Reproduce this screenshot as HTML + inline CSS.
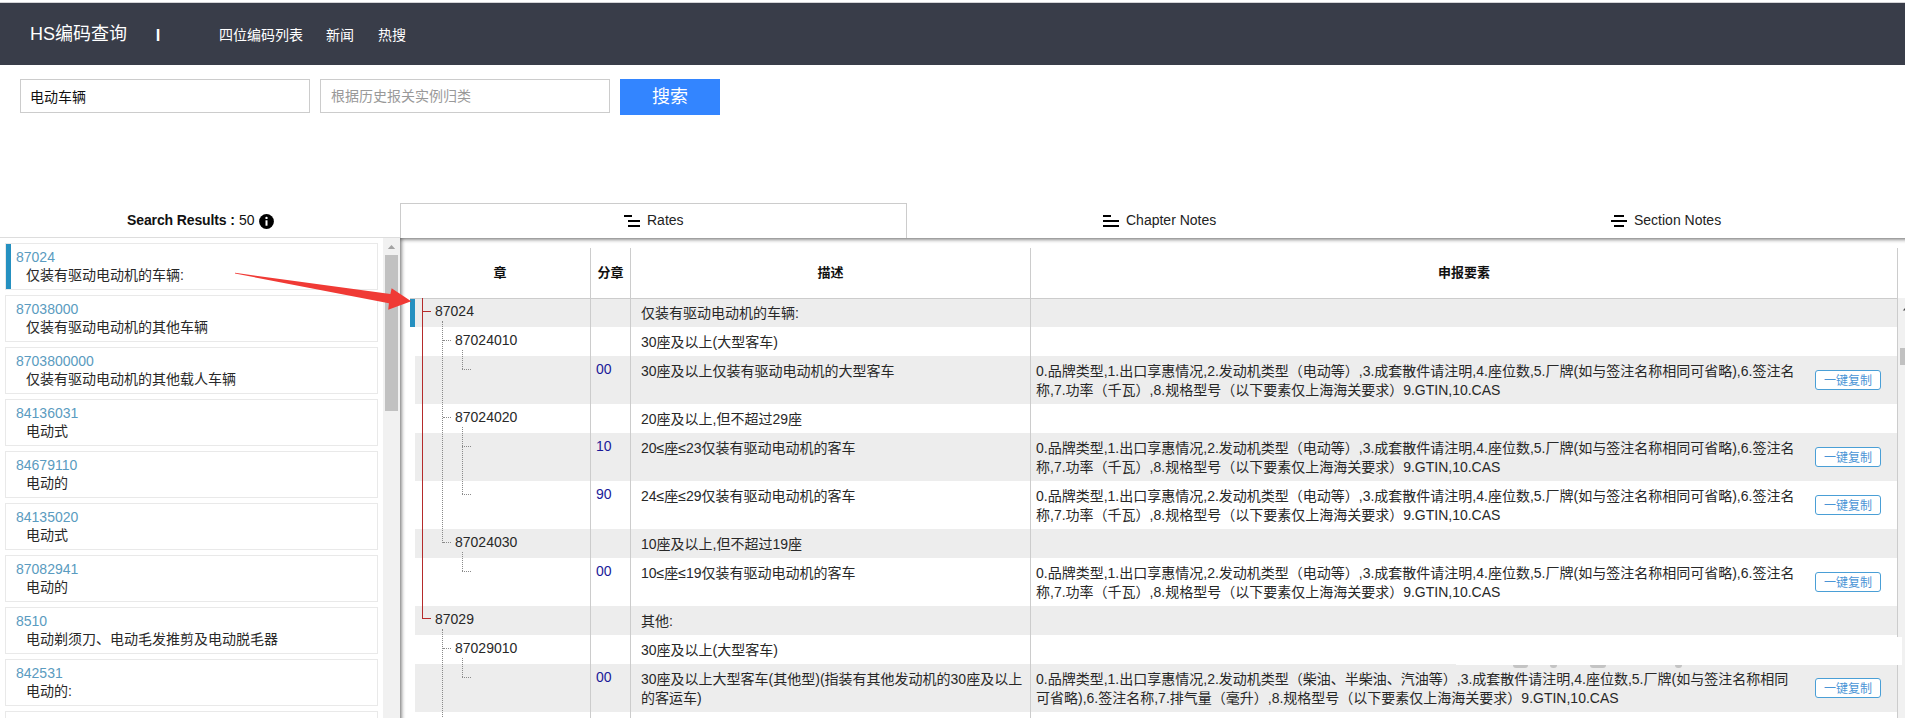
<!DOCTYPE html>
<html lang="zh-CN">
<head>
<meta charset="utf-8">
<title>HS编码查询</title>
<style>
*{box-sizing:border-box;margin:0;padding:0}
html,body{width:1905px;height:718px;overflow:hidden;background:#fff}
body{position:relative;font-family:"Liberation Sans","Noto Sans CJK SC",sans-serif;font-size:14px;color:#222}
.abs{position:absolute}
/* header */
#hdr{left:0;top:3px;width:1905px;height:62px;background:#393d49;box-shadow:0 -1px 0 0 #d4d4d7}
#hdr span{position:absolute;color:#fff;white-space:nowrap}
#logo{left:30px;top:19px;font-size:18px;line-height:24px}
#sep{left:154px;top:21px;width:8px;text-align:center;font-size:12px;line-height:20px;font-weight:bold;transform:scaleX(1.5)}
.nav{top:22px;font-size:14px;line-height:20px}
/* search */
.inp{top:79px;height:34px;width:290px;border:1px solid #ccc;background:#fff;font-size:14px;line-height:32px;padding-left:10px;white-space:nowrap}
#btn{left:620px;top:79px;width:100px;height:36px;background:#3385ff;color:#fff;font-size:18px;line-height:37px;text-align:center}
/* left */
#srh{left:0;top:209px;width:400px;height:22px;line-height:22px;font-size:14px;color:#111;white-space:nowrap}
#srh b{position:absolute;left:127px;top:0;letter-spacing:-.12px}
#srh i{position:absolute;left:239px;top:0;font-style:normal}
#hline{left:0;top:237px;width:400px;height:1px;background:#ddd}
.it{left:5px;width:373px;height:47px;border:1px solid #e9e9e9;background:#fff}
.it.sel{box-shadow:inset 5px 0 0 0 #2590c0}
.it .c{position:absolute;left:10px;top:4px;font-size:14px;line-height:18px;color:#5a9bc0;white-space:nowrap}
.it .d{position:absolute;left:20px;top:22px;font-size:14px;line-height:19px;color:#282828;white-space:nowrap}
/* scrollbar */
#sbt{left:383px;top:238px;width:17px;height:480px;background:#f1f1f1}
#sbh{left:385px;top:255px;width:13px;height:156px;background:#c1c1c1}
/* tabs */
#tab1{left:400px;top:203px;width:507px;height:36px;border:1px solid #ccc;border-bottom:none;background:#fff}
.tl{top:211px;font-size:14px;line-height:18px;color:#222;white-space:nowrap}
.bar{height:2px;background:#000}
/* panel */
#panel{left:400px;top:238px;width:1530px;height:500px;background:#fff;box-shadow:inset 1px 1px 4px 0 rgba(0,0,0,.65)}
.row{left:415px;width:1482px}
.g{background:#ededed}
.vl{width:1px;background:#ccc;top:248px;height:470px}
.th{top:263px;height:20px;line-height:20px;font-size:13px;font-weight:bold;color:#111;text-align:center;white-space:nowrap}
.t{font-size:14px;line-height:19px;color:#282828;white-space:nowrap}
.sub{font-size:14px;line-height:19px;color:#1a1a99;left:596px}
.cb{left:1815px;width:66px;height:20px;border:1px solid #4a9fd6;border-radius:3px;background:#fff;color:#4a95d6;font-size:12px;line-height:21px;text-align:center;white-space:nowrap}
.dv{width:0;border-left:1px dotted #8a8a8a}
.dh{height:0;border-top:1px dotted #8a8a8a}
</style>
</head>
<body>
<!-- header -->
<div id="hdr" class="abs">
  <span id="logo">HS编码查询</span>
  <span id="sep">|</span>
  <span class="nav" style="left:219px">四位编码列表</span>
  <span class="nav" style="left:326px">新闻</span>
  <span class="nav" style="left:378px">热搜</span>
</div>
<!-- search -->
<div class="abs inp" style="left:20px;color:#111;line-height:34px;padding-left:9px">电动车辆</div>
<div class="abs inp" style="left:320px;color:#999">根据历史报关实例归类</div>
<div id="btn" class="abs">搜索</div>

<!-- left heading -->
<div id="srh" class="abs"><b>Search Results :</b><i>50</i></div>
<svg class="abs" style="left:259px;top:214px" width="15" height="15" viewBox="0 0 15 15"><circle cx="7.5" cy="7.5" r="7.4" fill="#000"/><rect x="6.5" y="6.3" width="2" height="5.4" fill="#fff"/><circle cx="7.5" cy="3.9" r="1.2" fill="#fff"/></svg>
<div id="hline" class="abs"></div>

<!-- list -->
<div class="abs it sel" style="top:243px"><span class="c">87024</span><span class="d">仅装有驱动电动机的车辆:</span></div>
<div class="abs it" style="top:295px"><span class="c">87038000</span><span class="d">仅装有驱动电动机的其他车辆</span></div>
<div class="abs it" style="top:347px"><span class="c">8703800000</span><span class="d">仅装有驱动电动机的其他载人车辆</span></div>
<div class="abs it" style="top:399px"><span class="c">84136031</span><span class="d">电动式</span></div>
<div class="abs it" style="top:451px"><span class="c">84679110</span><span class="d">电动的</span></div>
<div class="abs it" style="top:503px"><span class="c">84135020</span><span class="d">电动式</span></div>
<div class="abs it" style="top:555px"><span class="c">87082941</span><span class="d">电动的</span></div>
<div class="abs it" style="top:607px"><span class="c">8510</span><span class="d">电动剃须刀、电动毛发推剪及电动脱毛器</span></div>
<div class="abs it" style="top:659px"><span class="c">842531</span><span class="d">电动的:</span></div>
<div class="abs it" style="top:711px"><span class="c">&nbsp;</span></div>

<!-- scrollbar -->
<div id="sbt" class="abs"></div>
<svg class="abs" style="left:383px;top:238px" width="17" height="17" viewBox="0 0 17 17"><path d="M4.8 11 L8.5 7 L12.2 11 Z" fill="#a3a3a3"/></svg>
<div id="sbh" class="abs"></div>

<!-- tabs -->
<div id="tab1" class="abs"></div>
<div class="abs bar" style="left:624px;top:215px;width:8px"></div>
<div class="abs bar" style="left:628px;top:220px;width:12px"></div>
<div class="abs bar" style="left:628px;top:225px;width:12px"></div>
<div class="abs tl" style="left:647px">Rates</div>
<div class="abs bar" style="left:1103px;top:215px;width:8px"></div>
<div class="abs bar" style="left:1103px;top:220px;width:16px"></div>
<div class="abs bar" style="left:1103px;top:225px;width:16px"></div>
<div class="abs tl" style="left:1126px">Chapter Notes</div>
<div class="abs bar" style="left:1614px;top:215px;width:10px"></div>
<div class="abs bar" style="left:1611px;top:220px;width:16px"></div>
<div class="abs bar" style="left:1614px;top:225px;width:10px"></div>
<div class="abs tl" style="left:1634px">Section Notes</div>

<!-- panel -->
<div id="panel" class="abs"></div>
<!-- table -->
<div class="abs th" style="left:410px;width:180px">章</div>
<div class="abs th" style="left:591px;width:39px">分章</div>
<div class="abs th" style="left:631px;width:399px">描述</div>
<div class="abs th" style="left:1031px;width:866px">申报要素</div>
<div class="abs row g" style="top:298px;height:29px"></div>
<div class="abs row g" style="top:356px;height:48px"></div>
<div class="abs row g" style="top:433px;height:48px"></div>
<div class="abs row g" style="top:529px;height:29px"></div>
<div class="abs row g" style="top:606px;height:29px"></div>
<div class="abs row g" style="top:664px;height:48px"></div>
<div class="abs" style="left:410px;top:299px;width:5px;height:28px;background:#2590c0"></div>
<div class="abs" style="left:410px;top:298px;width:1488px;height:1px;background:#ccc"></div>
<div class="abs vl" style="left:590px"></div>
<div class="abs vl" style="left:630px"></div>
<div class="abs vl" style="left:1030px"></div>
<div class="abs vl" style="left:1897px"></div>
<div class="abs" style="left:1898px;top:298px;width:17px;height:420px;background:#f1f1f1"></div>
<svg class="abs" style="left:1898px;top:298px" width="17" height="17" viewBox="0 0 17 17"><path d="M4.8 12.5 L8.5 8.5 L12.2 12.5 Z" fill="#505050"/></svg>
<div class="abs" style="left:1900px;top:348px;width:13px;height:17px;background:#c1c1c1"></div>
<div class="abs" style="left:422px;top:298px;width:1px;height:321px;background:#b52b2b"></div>
<div class="abs" style="left:422px;top:311px;width:9px;height:1px;background:#b52b2b"></div>
<div class="abs" style="left:422px;top:618px;width:9px;height:1px;background:#b52b2b"></div>
<div class="abs dv" style="left:442px;top:321px;height:222px"></div>
<div class="abs dv" style="left:442px;top:629px;height:90px"></div>
<div class="abs dh" style="left:443px;top:340px;width:8px"></div>
<div class="abs dh" style="left:443px;top:417px;width:8px"></div>
<div class="abs dh" style="left:443px;top:542px;width:8px"></div>
<div class="abs dh" style="left:443px;top:648px;width:8px"></div>
<div class="abs dh" style="left:443px;top:725px;width:8px"></div>
<div class="abs dv" style="left:462px;top:350px;height:19px"></div>
<div class="abs dv" style="left:462px;top:427px;height:67px"></div>
<div class="abs dv" style="left:462px;top:552px;height:19px"></div>
<div class="abs dv" style="left:462px;top:658px;height:19px"></div>
<div class="abs dh" style="left:462px;top:369px;width:9px"></div>
<div class="abs dh" style="left:462px;top:446px;width:9px"></div>
<div class="abs dh" style="left:462px;top:494px;width:9px"></div>
<div class="abs dh" style="left:462px;top:571px;width:9px"></div>
<div class="abs dh" style="left:462px;top:677px;width:9px"></div>
<div class="abs t" style="left:435px;top:302px">87024</div>
<div class="abs t" style="left:641px;top:304px">仅装有驱动电动机的车辆:</div>
<div class="abs t" style="left:455px;top:331px">87024010</div>
<div class="abs t" style="left:641px;top:333px">30座及以上(大型客车)</div>
<div class="abs sub" style="top:360px">00</div>
<div class="abs t" style="left:641px;top:362px">30座及以上仅装有驱动电动机的大型客车</div>
<div class="abs t" style="left:1036px;top:362px">0.品牌类型,1.出口享惠情况,2.发动机类型（电动等）,3.成套散件请注明,4.座位数,5.厂牌(如与签注名称相同可省略),6.签注名<br>称,7.功率（千瓦）,8.规格型号（以下要素仅上海海关要求）9.GTIN,10.CAS</div>
<div class="abs cb" style="top:370px">一键复制</div>
<div class="abs t" style="left:455px;top:408px">87024020</div>
<div class="abs t" style="left:641px;top:410px">20座及以上,但不超过29座</div>
<div class="abs sub" style="top:437px">10</div>
<div class="abs t" style="left:641px;top:439px">20≤座≤23仅装有驱动电动机的客车</div>
<div class="abs t" style="left:1036px;top:439px">0.品牌类型,1.出口享惠情况,2.发动机类型（电动等）,3.成套散件请注明,4.座位数,5.厂牌(如与签注名称相同可省略),6.签注名<br>称,7.功率（千瓦）,8.规格型号（以下要素仅上海海关要求）9.GTIN,10.CAS</div>
<div class="abs cb" style="top:447px">一键复制</div>
<div class="abs sub" style="top:485px">90</div>
<div class="abs t" style="left:641px;top:487px">24≤座≤29仅装有驱动电动机的客车</div>
<div class="abs t" style="left:1036px;top:487px">0.品牌类型,1.出口享惠情况,2.发动机类型（电动等）,3.成套散件请注明,4.座位数,5.厂牌(如与签注名称相同可省略),6.签注名<br>称,7.功率（千瓦）,8.规格型号（以下要素仅上海海关要求）9.GTIN,10.CAS</div>
<div class="abs cb" style="top:495px">一键复制</div>
<div class="abs t" style="left:455px;top:533px">87024030</div>
<div class="abs t" style="left:641px;top:535px">10座及以上,但不超过19座</div>
<div class="abs sub" style="top:562px">00</div>
<div class="abs t" style="left:641px;top:564px">10≤座≤19仅装有驱动电动机的客车</div>
<div class="abs t" style="left:1036px;top:564px">0.品牌类型,1.出口享惠情况,2.发动机类型（电动等）,3.成套散件请注明,4.座位数,5.厂牌(如与签注名称相同可省略),6.签注名<br>称,7.功率（千瓦）,8.规格型号（以下要素仅上海海关要求）9.GTIN,10.CAS</div>
<div class="abs cb" style="top:572px">一键复制</div>
<div class="abs t" style="left:435px;top:610px">87029</div>
<div class="abs t" style="left:641px;top:612px">其他:</div>
<div class="abs t" style="left:455px;top:639px">87029010</div>
<div class="abs t" style="left:641px;top:641px">30座及以上(大型客车)</div>
<div class="abs sub" style="top:668px">00</div>
<div class="abs t" style="left:641px;top:670px">30座及以上大型客车(其他型)(指装有其他发动机的30座及以上<br>的客运车)</div>
<div class="abs t" style="left:1036px;top:670px">0.品牌类型,1.出口享惠情况,2.发动机类型（柴油、半柴油、汽油等）,3.成套散件请注明,4.座位数,5.厂牌(如与签注名称相同<br>可省略),6.签注名称,7.排气量（毫升）,8.规格型号（以下要素仅上海海关要求）9.GTIN,10.CAS</div>
<div class="abs cb" style="top:678px">一键复制</div>
<div class="abs" style="left:1456px;top:637px;width:446px;height:28px;background:#fff"></div>
<div class="abs" style="left:1513px;top:665px;width:15px;height:3px;background:#c4c4c4;border-radius:0 0 3px 3px"></div>
<div class="abs" style="left:1550px;top:665px;width:7px;height:3px;background:#c4c4c4;border-radius:0 0 3px 3px"></div>
<div class="abs" style="left:1590px;top:665px;width:16px;height:3px;background:#c4c4c4;border-radius:0 0 3px 3px"></div>
<div class="abs" style="left:1675px;top:665px;width:7px;height:3px;background:#c4c4c4;border-radius:0 0 3px 3px"></div>
<!-- arrow -->
<svg class="abs" style="left:230px;top:268px" width="190" height="46" viewBox="230 268 190 46"><polygon points="235,272.8 390.4,294 391.6,288.2 411.2,301.3 388.2,309.7 388.9,303.2 235,273.5" fill="#f03a35"/></svg>
</body>
</html>
